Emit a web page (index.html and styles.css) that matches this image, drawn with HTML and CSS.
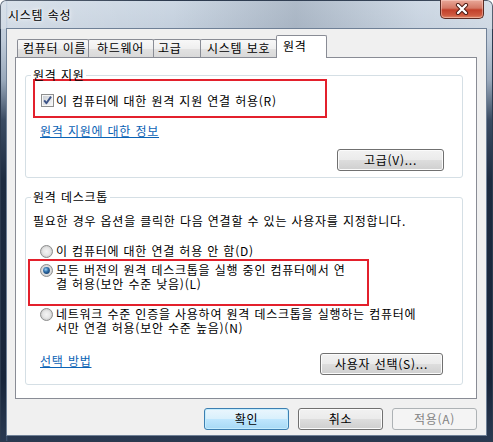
FILE: index.html
```html
<!DOCTYPE html>
<html lang="ko">
<head>
<meta charset="utf-8">
<title>시스템 속성</title>
<link rel="stylesheet" href="styles.css">
</head>
<body>
<div class="window">
  <div class="titlebar">
    <div class="title">시스템 속성</div>
    <div class="close">
      <svg width="14" height="12" viewBox="0 0 14 12">
        <path d="M3 2 L11 10 M11 2 L3 10" stroke="#4a1810" stroke-width="4.2" stroke-linecap="round" fill="none"/>
        <path d="M3 2 L11 10 M11 2 L3 10" stroke="#ffffff" stroke-width="2.4" stroke-linecap="round" fill="none"/>
      </svg>
    </div>
  </div>
  <div class="client">
    <div class="tabs">
      <div class="tab tab1">컴퓨터 이름</div>
      <div class="tab tab2">하드웨어</div>
      <div class="tab tab3">고급</div>
      <div class="tab tab4">시스템 보호</div>
      <div class="tab tab5 active">원격</div>
    </div>
    <div class="panel">
      <div class="group g1">
        <div class="group-title">원격 지원</div>
        <div class="mark mark1">
          <div class="option">
            <svg class="cb" width="13" height="13" viewBox="0 0 13 13">
              <defs>
                <linearGradient id="cbg" x1="0" y1="0" x2="1" y2="1">
                  <stop offset="0" stop-color="#cbcfd5"/>
                  <stop offset="1" stop-color="#f6f6f6"/>
                </linearGradient>
              </defs>
              <rect x="0.5" y="0.5" width="12" height="12" fill="#f6f6f6" stroke="#8e8f8f"/>
              <rect x="2" y="2" width="9" height="9" fill="url(#cbg)"/>
              <path d="M3.2 6.4 L5.4 9.2 L10 2.6" fill="none" stroke="#3d5488" stroke-width="1.9" stroke-linejoin="round"/>
            </svg>
            <span class="label">이 컴퓨터에 대한 원격 지원 연결 허용(R)</span>
          </div>
        </div>
        <a class="link link1" href="#">원격 지원에 대한 정보</a>
        <div class="btn-row">
          <button class="btn btn-adv">고급(V)...</button>
        </div>
      </div>

      <div class="group g2">
        <div class="group-title">원격 데스크톱</div>
        <p class="desc">필요한 경우 옵션을 클릭한 다음 연결할 수 있는 사용자를 지정합니다.</p>
        <div class="option radio-opt r1">
          <svg class="rb" width="13" height="13" viewBox="0 0 13 13">
            <defs>
              <radialGradient id="rg1" cx="0.5" cy="0.5" r="0.5">
                <stop offset="0" stop-color="#f4f4f4"/>
                <stop offset="0.6" stop-color="#e6e6e6"/>
                <stop offset="1" stop-color="#c9c9c9"/>
              </radialGradient>
            </defs>
            <circle cx="6.5" cy="6.5" r="6" fill="url(#rg1)" stroke="#8e8f8f"/>
          </svg>
          <span class="label">이 컴퓨터에 대한 연결 허용 안 함(D)</span>
        </div>
        <div class="mark mark2">
          <div class="option radio-opt r2">
            <svg class="rb" width="13" height="13" viewBox="0 0 13 13">
              <defs>
                <radialGradient id="rg2" cx="0.5" cy="0.5" r="0.5">
                  <stop offset="0" stop-color="#f4f4f4"/>
                  <stop offset="0.6" stop-color="#e6e6e6"/>
                  <stop offset="1" stop-color="#c9c9c9"/>
                </radialGradient>
                <radialGradient id="rd2" cx="0.4" cy="0.35" r="0.7">
                  <stop offset="0" stop-color="#9fd3f7"/>
                  <stop offset="0.5" stop-color="#2f6ea8"/>
                  <stop offset="1" stop-color="#173f6f"/>
                </radialGradient>
              </defs>
              <circle cx="6.5" cy="6.5" r="6" fill="url(#rg2)" stroke="#8e8f8f"/>
              <circle cx="6.5" cy="6.5" r="3.4" fill="url(#rd2)"/>
            </svg>
            <span class="label">모든 버전의 원격 데스크톱을 실행 중인 컴퓨터에서 연<br>결 허용(보안 수준 낮음)(L)</span>
          </div>
        </div>
        <div class="option radio-opt r3">
          <svg class="rb" width="13" height="13" viewBox="0 0 13 13">
            <defs>
              <radialGradient id="rg3" cx="0.5" cy="0.5" r="0.5">
                <stop offset="0" stop-color="#f4f4f4"/>
                <stop offset="0.6" stop-color="#e6e6e6"/>
                <stop offset="1" stop-color="#c9c9c9"/>
              </radialGradient>
            </defs>
            <circle cx="6.5" cy="6.5" r="6" fill="url(#rg3)" stroke="#8e8f8f"/>
          </svg>
          <span class="label">네트워크 수준 인증을 사용하여 원격 데스크톱을 실행하는 컴퓨터에<br>서만 연결 허용(보안 수준 높음)(N)</span>
        </div>
        <div class="bottom-row">
          <a class="link link2" href="#">선택 방법</a>
          <button class="btn btn-users">사용자 선택(S)...</button>
        </div>
      </div>
    </div>
    <div class="footer">
      <button class="btn btn-default">확인</button>
      <button class="btn">취소</button>
      <button class="btn btn-disabled">적용(A)</button>
    </div>
  </div>
</div>
</body>
</html>
```

FILE: styles.css
```css
html, body {
  margin: 0;
  padding: 0;
  background: #ffffff;
}

body {
  font-family: "Noto Sans CJK KR", "Noto Sans", sans-serif;
  font-size: 12px;
  color: #000000;
  letter-spacing: 0.75px;
  word-spacing: 0.2px;
}

.window {
  width: 493px;
  height: 442px;
  box-sizing: border-box;
  display: flex;
  flex-direction: column;
  border-radius: 6px 6px 0 0;
  overflow: hidden;
  background:
    linear-gradient(90deg, rgba(0,0,0,0) 0, rgba(0,0,0,0) 6px, rgba(120,150,190,0.35) 2px, rgba(0,0,0,0) 8px),
    linear-gradient(to bottom, #cdd8e4 0px, #c0ccda 40px, #9aa9bb 80px, #3a4b62 120px, #1d2b40 180px, #18253a 380px, #2a3a52 100%);
  box-shadow: inset 0 0 0 1px #2c3a4e;
}

.titlebar {
  height: 29px;
  flex: none;
  display: flex;
  justify-content: space-between;
  align-items: flex-start;
  padding: 0 9px 0 8px;
  background: linear-gradient(90deg, rgba(255,255,255,0.25) 0, rgba(255,255,255,0) 35%, rgba(70,85,105,0.22) 60%, rgba(255,255,255,0.05) 85%, rgba(255,255,255,0.2) 100%);
}

.title {
  margin-top: 8px;
  line-height: 14px;
  color: #000;
  text-shadow: 0 0 6px #ffffff, 0 0 3px #ffffff;
}

.close {
  width: 44px;
  height: 19px;
  box-sizing: border-box;
  border: 1px solid #5b2a22;
  border-top: none;
  border-radius: 0 0 5px 5px;
  background: linear-gradient(to bottom, #e9a899 0, #d47865 45%, #c2402a 55%, #cf5a40 85%, #e08a6a 100%);
  box-shadow: inset 0 0 0 1px rgba(255,220,210,0.45);
  display: flex;
  align-items: center;
  justify-content: center;
}

.client {
  flex: 1;
  margin: 0 7px 7px 7px;
  background: #f0f0f0;
  padding: 6px 9px 5px 8px;
  box-sizing: border-box;
  display: flex;
  flex-direction: column;
  box-shadow: 0 0 0 1px #6f8096;
}

/* tabs */
.tabs {
  display: flex;
  align-items: flex-end;
  height: 22px;
  margin-left: 2px;
}

.tab {
  box-sizing: border-box;
  height: 18px;
  line-height: 16px;
  border: 1px solid #898c95;
  border-bottom: none;
  border-radius: 2px 2px 0 0;
  background: linear-gradient(to bottom, #f8f8f8 0, #efefef 50%, #e2e2e2 51%, #d9d9d9 100%);
  white-space: nowrap;
  margin-left: -1px;
}

.tab1 { width: 72px; padding-left: 5px; margin-left: 0; }
.tab2 { width: 66px; padding-left: 8px; }
.tab3 { width: 48px; padding-left: 4px; }
.tab4 { width: 77px; padding-left: 6px; }

.tab.active {
  width: 51px;
  height: 23px;
  padding-left: 6px;
  padding-top: 3px;
  line-height: 14px;
  background: #ffffff;
  margin-bottom: -1px;
  position: relative;
  z-index: 1;
}

/* panel */
.panel {
  box-sizing: border-box;
  height: 342px;
  background: #ffffff;
  border: 1px solid #898c95;
  padding: 17px 13px 0 9px;
}

.group {
  border: 1px solid #d5dfe5;
  border-radius: 3px;
}

.group-title {
  width: fit-content;
  margin: -8px 0 0 5px;
  padding: 0 2px;
  line-height: 14px;
  background: #ffffff;
}

.g1 {
  padding-bottom: 6px;
}

.g2 {
  margin-top: 19px;
  padding-bottom: 9px;
}

.mark {
  border: 2px solid #e3202c;
  box-sizing: border-box;
}

.mark1 {
  width: 294px;
  height: 39px;
  margin: -3px 0 0 7px;
  padding: 13px 0 0 6px;
}

.mark2 {
  width: 341px;
  height: 47px;
  margin: 1px 0 0 2px;
  padding: 2px 0 0 10px;
}

.option {
  display: flex;
  align-items: flex-start;
  line-height: 14px;
  white-space: nowrap;
}

.cb {
  flex: none;
  margin: 0 2px 0 0;
  display: block;
}

.rb {
  flex: none;
  margin: 1px 3px 0 0;
  display: block;
}

.link {
  display: block;
  width: fit-content;
  color: #0b63b5;
  text-decoration: underline;
  line-height: 14px;
}

.link1 {
  margin: 6px 0 0 14px;
}

.btn-row {
  display: flex;
  justify-content: flex-end;
  margin-top: 11px;
  padding-right: 18px;
}

.btn {
  font-family: inherit;
  font-size: 12px;
  letter-spacing: 0.75px;
  word-spacing: 0.2px;
  color: #000;
  height: 22px;
  box-sizing: border-box;
  padding: 0;
  line-height: 18px;
  border: 1px solid #707070;
  border-radius: 3px;
  background: linear-gradient(to bottom, #f2f2f2 0, #ebebeb 48%, #dddddd 52%, #cfcfcf 100%);
  box-shadow: inset 0 0 0 1px #fbfbfb;
}

.btn-adv {
  width: 107px;
}

.desc {
  margin: 10px 0 0 7px;
  line-height: 14px;
}

.r1 {
  margin: 16px 0 0 14px;
}

.r3 {
  margin: 1px 0 0 14px;
}

.bottom-row {
  display: flex;
  justify-content: space-between;
  align-items: flex-start;
  margin: 18px 19px 0 14px;
}

.link2 {
  margin-top: 1px;
}

.btn-users {
  width: 123px;
}

/* footer */
.footer {
  display: flex;
  justify-content: flex-end;
  gap: 9px;
  margin-top: 9px;
}

.footer .btn {
  width: 85px;
}

.btn-default {
  border-color: #3c7fb1;
  background: linear-gradient(to bottom, #eaf6fd 0, #d9f0fc 48%, #bee6fd 52%, #a7d9f5 100%);
  box-shadow: inset 0 0 0 1px #c4ecfd;
}

.btn-disabled {
  border-color: #adb2b5;
  background: #f4f4f4;
  color: #838383;
  box-shadow: none;
}
```
